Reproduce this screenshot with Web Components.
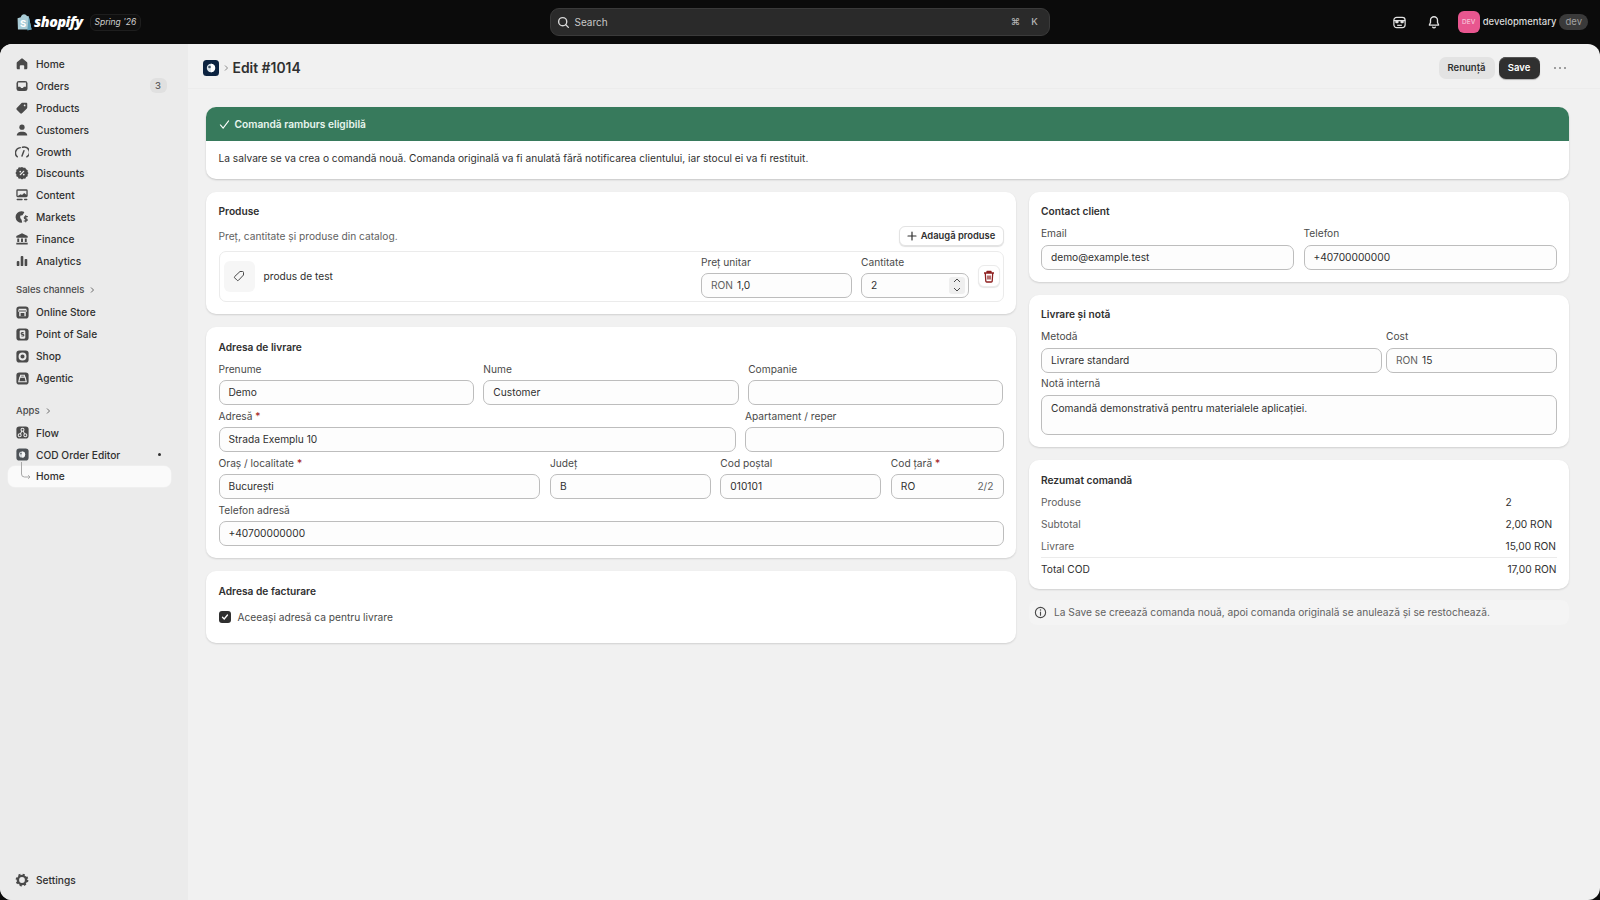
<!doctype html>
<html lang="ro"><head><meta charset="utf-8"><title>Edit #1014</title>
<style>
html,body{margin:0;height:100%;background:#0b0b0b;overflow:hidden}
body{font:400 10.2px/14px Inter,"Liberation Sans",sans-serif;color:#303030}
</style></head><body>
<app-shell>
  <top-bar slot="top"></top-bar>
  <side-nav slot="side">
    <nav-item icon="home">Home</nav-item>
    <nav-item icon="orders" badge="3">Orders</nav-item>
    <nav-item icon="products">Products</nav-item>
    <nav-item icon="customers">Customers</nav-item>
    <nav-item icon="growth">Growth</nav-item>
    <nav-item icon="discounts">Discounts</nav-item>
    <nav-item icon="content">Content</nav-item>
    <nav-item icon="markets">Markets</nav-item>
    <nav-item icon="finance">Finance</nav-item>
    <nav-item icon="analytics">Analytics</nav-item>
    <nav-head style="margin-top:7.4px">Sales channels</nav-head>
    <nav-item icon="store" tile>Online Store</nav-item>
    <nav-item icon="pos" tile>Point of Sale</nav-item>
    <nav-item icon="shop" tile>Shop</nav-item>
    <nav-item icon="agentic" tile>Agentic</nav-item>
    <nav-head style="margin-top:10.8px">Apps</nav-head>
    <nav-item icon="flow" tile>Flow</nav-item>
    <nav-item icon="cod" tile dot>COD Order Editor</nav-item>
    <nav-item sub selected>Home</nav-item>
    <nav-item slot="bottom" icon="settings">Settings</nav-item>
  </side-nav>
  <page-head slot="main"></page-head>
  <page-body slot="main">
    <notice-banner></notice-banner>
    <two-cols>
      <form-card slot="left" heading="Produse" raise>
        <product-editor></product-editor>
      </form-card>
      <form-card slot="left" heading="Adresa de livrare">
        <form-row cols="1fr 1fr 1fr">
          <form-field label="Prenume" value="Demo"></form-field>
          <form-field label="Nume" value="Customer"></form-field>
          <form-field label="Companie"></form-field>
        </form-row>
        <form-row cols="2fr 1fr">
          <form-field label="Adresă" req value="Strada Exemplu 10"></form-field>
          <form-field label="Apartament / reper"></form-field>
        </form-row>
        <form-row cols="2fr 1fr 1fr .7fr">
          <form-field label="Oraș / localitate" req value="București"></form-field>
          <form-field label="Județ" value="B"></form-field>
          <form-field label="Cod poștal" value="010101"></form-field>
          <form-field label="Cod țară" req value="RO" suffix="2/2"></form-field>
        </form-row>
        <form-row cols="1fr">
          <form-field label="Telefon adresă" value="+40700000000"></form-field>
        </form-row>
      </form-card>
      <form-card slot="left" heading="Adresa de facturare" after="12.5px">
        <check-line>Aceeași adresă ca pentru livrare</check-line>
      </form-card>
      <form-card slot="right" heading="Contact client" raise style="--lab:-.75px">
        <form-row cols="1fr 1fr">
          <form-field label="Email" value="demo@example.test"></form-field>
          <form-field label="Telefon" value="+40700000000"></form-field>
        </form-row>
      </form-card>
      <form-card slot="right" heading="Livrare și notă" raise style="--lab:-.75px">
        <form-row cols="2fr 1fr" gap="4px">
          <form-field label="Metodă" value="Livrare standard"></form-field>
          <form-field label="Cost" prefix="RON" value="15"></form-field>
        </form-row>
        <form-row cols="1fr">
          <form-field label="Notă internă" value="Comandă demonstrativă pentru materialele aplicației." area></form-field>
        </form-row>
      </form-card>
      <form-card slot="right" heading="Rezumat comandă">
        <sum-line label="Produse" value="2"></sum-line>
        <sum-line label="Subtotal" value="2,00 RON"></sum-line>
        <sum-line label="Livrare" value="15,00 RON"></sum-line>
        <sum-line label="Total COD" value="17,00 RON" total></sum-line>
      </form-card>
      <info-note slot="right">La Save se creează comanda nouă, apoi comanda originală se anulează și se restochează.</info-note>
    </two-cols>
  </page-body>
</app-shell>
<script>
function def(name, css, html){
  customElements.define(name, class extends HTMLElement{
    connectedCallback(){
      if(this.shadowRoot) return;
      const r=this.attachShadow({mode:'open'});
      const h=typeof html==='function'?html(this):html;
      r.innerHTML='<style>'+css+'</style>'+h;
    }
  });
}
const C='currentColor';
const ICONS={
 home:`<path fill="${C}" d="M7.1 1.9a1.4 1.4 0 0 1 1.8 0l4.6 3.9c.4.3.6.8.6 1.3v5.4c0 .8-.7 1.5-1.5 1.5H10.5v-3.7a1 1 0 0 0-1-1h-3a1 1 0 0 0-1 1V14H3.4c-.8 0-1.5-.7-1.5-1.5V7.1c0-.5.2-1 .6-1.3z"/>`,
 orders:`<rect x="1.7" y="2.2" width="12.6" height="11.6" rx="2.8" fill="${C}"/><path fill="#ebebeb" d="M3.5 4h9v4.8H10.2L9 10.3H7L5.8 8.8H3.5z"/>`,
 products:`<path fill="${C}" fill-rule="evenodd" d="M8.5 2H13a1 1 0 0 1 1 1v4.5c0 .4-.2.8-.4 1L8 14a1.4 1.4 0 0 1-2 0l-4-4a1.4 1.4 0 0 1 0-2l5.5-5.6c.3-.3.6-.4 1-.4zM11 4a1 1 0 1 0 0 2 1 1 0 0 0 0-2z"/>`,
 customers:`<circle cx="8" cy="4.8" r="3" fill="${C}"/><path fill="${C}" d="M2 14.3c0-1.2.3-2 1-2.7C4 10.600 6 10 8 10s4 .6 5 1.600c.7.7 1 1.500 1 2.700z"/>`,
 growth:`<g fill="none" stroke="${C}" stroke-width="1.7" stroke-linecap="round"><path d="M2.6 13.5A6 6 0 0 1 6 3"/><path d="M8.6 2.6A6 6 0 0 1 13.5 13.5"/><path d="M8 12.5 10.2 6.5"/></g>`,
 discounts:`<path fill="${C}" d="M8 1l1.700 1.100 2-.1 1 1.800 1.800 1-.1 2L15.500 8l-1.100 1.700.1 2-1.800 1-1 1.800-2-.1L8 15.500l-1.700-1.100-2 .1-1-1.800-1.800-1 .1-2L.5 8l1.100-1.700-.1-2 1.800-1 1-1.800 2 .1z"/><path stroke="#ebebeb" stroke-width="1.3" stroke-linecap="round" d="M6 10l4-4"/><circle cx="6" cy="6.3" r="1" fill="#ebebeb"/><circle cx="10" cy="9.8" r="1" fill="#ebebeb"/>`,
 content:`<rect x="1.5" y="1.5" width="13" height="9" rx="1.6" fill="${C}"/><path fill="#ebebeb" d="M3 3h10v4.800L10.500 5.800 8 8 6.500 7 3 9z"/><rect x="1.8" y="12.3" width="7" height="1.7" rx=".8" fill="${C}"/><rect x="10.2" y="12.3" width="4" height="1.7" rx=".8" fill="${C}"/>`,
 markets:`<path fill="${C}" d="M7.500 1.500a6.500 6.500 0 0 1 3.200.9L9.500 4.500l-1 1.500-2.500.5L6 9l1.500 2 .7 3.400A6.500 6.500 0 1 1 7.500 1.500z"/><path fill="none" stroke="${C}" stroke-width="1.3" stroke-linecap="round" d="M14.200 7.500h-2.300a1 1 0 0 0 0 2.600h.8a1 1 0 0 1 0 2.500H10.400M12.300 6.500v7"/>`,
 finance:`<path fill="${C}" d="M8 1.500l6.500 3.200v1.800h-13V4.700zM2.600 7.500h2.200v4H2.600zM6.900 7.500h2.200v4H6.900zM11.200 7.500h2.200v4h-2.200zM1.500 12.300h13v2h-13z"/>`,
 analytics:`<g fill="${C}"><rect x="2" y="8" width="3" height="5.8" rx="1"/><rect x="6.5" y="2.3" width="3" height="11.5" rx="1"/><rect x="11" y="5.6" width="3" height="8.2" rx="1"/></g>`,
 store:`<rect x="1.5" y="1.5" width="13" height="13" rx="3" fill="${C}"/><path fill="#ebebeb" d="M4 4h8l.6 2.500a1.300 1.300 0 0 1-1.100 1.300V12h-7V7.800A1.300 1.300 0 0 1 3.400 6.500z"/><path fill="${C}" d="M4.300 5.800h7.400v1H4.300zM6 8.500h4V12H6z"/>`,
 pos:`<rect x="1.5" y="1.5" width="13" height="13" rx="3" fill="${C}"/><rect x="5" y="3.5" width="6" height="9" rx="1.2" fill="#ebebeb"/><path stroke="${C}" stroke-width="1.2" fill="none" d="M9.200 6H7.500a.9.9 0 0 0 0 1.800h1a.9.9 0 0 1 0 1.800H6.800"/>`,
 shop:`<rect x="1.5" y="1.5" width="13" height="13" rx="3" fill="${C}"/><circle cx="8" cy="8" r="3.2" fill="none" stroke="#ebebeb" stroke-width="2"/>`,
 agentic:`<rect x="1.5" y="1.5" width="13" height="13" rx="3" fill="${C}"/><path fill="none" stroke="#ebebeb" stroke-width="1.2" d="M4 11.500 5.200 6.500h5.600l1.200 5zM6 6.500V4.500h4v2"/>`,
 flow:`<rect x="1.5" y="1.5" width="13" height="13" rx="3" fill="${C}"/><g fill="none" stroke="#ebebeb" stroke-width="1.1"><circle cx="8" cy="5" r="1.6"/><circle cx="5" cy="11" r="1.6"/><circle cx="11" cy="11" r="1.6"/><path d="M7.300 6.500 5.700 9.500M8.700 6.500l1.600 3"/></g>`,
 cod:`<rect x="1.5" y="1.5" width="13" height="13" rx="3" fill="#4d5257"/><circle cx="7.5" cy="8" r="3.3" fill="#d5d9dc"/><path d="M7.500 4.700a3.300 3.300 0 0 1 0 6.600z" fill="#f5f7f8"/><circle cx="6.3" cy="7" r="1" fill="#6b7379"/>`,
 settings:`<circle cx="8" cy="8" r="4.7" fill="none" stroke="${C}" stroke-width="2.8"/><circle cx="8" cy="8" r="6.3" fill="none" stroke="${C}" stroke-width="2" stroke-dasharray="2.4 2.55"/>`
};
const icon=(n,s)=>`<svg width="${s}" height="${s}" viewBox="0 0 16 16" aria-hidden="true">${ICONS[n]||''}</svg>`;

def('app-shell',`
:host{display:grid;grid-template-rows:44px 1fr;height:100vh}
.low{display:flex;min-height:0;border-radius:12px;overflow:hidden;background:#f1f1f1}
.main{flex:1;min-width:0;display:flex;flex-direction:column}
`,`<slot name="top"></slot><div class="low"><slot name="side"></slot><div class="main"><slot name="main"></slot></div></div>`);

def('top-bar',`
:host{display:flex;align-items:center;background:#0b0b0b;color:#e3e3e3;height:44px;position:relative}
.logo{display:flex;align-items:center;margin-left:16.5px;width:73.5px;gap:2.5px}
.word{font:italic 800 14.3px/20px "Open Sans",sans-serif;color:#fff;letter-spacing:-.45px}
.bag{position:relative;width:15px;height:18px}
.bag svg{display:block}
.bag b{position:absolute;left:3.5px;top:5px;font:700 9.5px/12px Inter,sans-serif;color:#fff}
.rel{font:italic 400 8.5px/15px Inter,sans-serif;color:#d0d0d0;border:1px solid #1e1e1e;border-radius:6px;padding:0 3.5px;height:15px;background:#0f0f0f}
.search{position:absolute;left:550px;top:8px;width:500px;height:28px;box-sizing:border-box;background:#2a2a2a;border:1px solid #3a3a3a;border-radius:9px;display:flex;align-items:center;padding:0 5px 0 6px;color:#c8c8c8;font-size:10px;gap:4.5px}
.search span.t{flex:1}
kbd{font:500 9.5px/14px Inter,"DejaVu Sans",sans-serif;color:#b5b5b5;width:19px;text-align:center}
kbd+kbd{margin-left:-4.5px}
.right{margin-left:auto;display:flex;align-items:center;padding-right:12px}
.ic{display:flex;width:34px;justify-content:center;color:#e3e3e3}
.av{width:22px;height:22px;border-radius:6px;background:#e8568f;color:#f7c7da;font:500 6.5px/22px Inter,sans-serif;text-align:center;margin:0 3px 0 7px}
.nm{font-size:9.5px;font-weight:500;color:#d9d9d9}
.dev{font-size:9.5px;color:#a0a0a0;background:#3a3a3a;border-radius:8px;padding:0 6px;margin-left:3px;line-height:16px}
`,`<div class="logo"><div class="bag"><svg width="15" height="18" viewBox="0 0 16 18"><path fill="#a9ccd6" d="M4 4C4.500 1.800 6 .6 7.500.6S10 1.500 10.500 2.500l2 .4L15.500 17 1 17 .6 5z"/><path fill="#5fa0b8" d="M12.500 2.900l3 14.100-4.500 1z"/></svg><b>S</b></div><span class="word">shopify</span></div>
<span class="rel">Spring '26</span>
<div class="search"><svg width="13" height="13" viewBox="0 0 16 16" fill="none" stroke="#d8d8d8" stroke-width="1.7" stroke-linecap="round"><circle cx="7" cy="7" r="5"/><path d="M10.800 10.800 14 14"/></svg><span class="t">Search</span><kbd>⌘</kbd><kbd>K</kbd></div>
<div class="right">
<span class="ic"><svg width="15" height="15" viewBox="0 0 16 16" fill="none" stroke="#e3e3e3" stroke-width="1.3"><rect x="2" y="2.5" width="12" height="11" rx="3"/><path d="M2 6h12" /><rect x="3.5" y="6" width="3.5" height="2.7" rx="1" fill="#e3e3e3" stroke="none"/><rect x="9" y="6" width="3.5" height="2.7" rx="1" fill="#e3e3e3" stroke="none"/><path d="M5.500 11h5"/></svg></span>
<span class="ic"><svg width="14" height="14" viewBox="0 0 16 16" fill="none" stroke="#e3e3e3" stroke-width="1.5" stroke-linejoin="round"><path d="M8 2a4 4 0 0 0-4 4v2.500L2.700 11.500h10.600L12 8.500V6a4 4 0 0 0-4-4z"/><path d="M6.500 13.800a1.700 1.700 0 0 0 3 0" stroke-linecap="round"/></svg></span>
<span class="av">DEV</span><span class="nm">developmentary</span><span class="dev">dev</span></div>`);

def('side-nav',`
:host{display:flex;flex-direction:column;width:188px;flex:none;background:#ebebeb;box-sizing:border-box;padding:9.1px 0 9.5px}
.sp{flex:1}
`,`<slot></slot><div class="sp"></div><slot name="bottom"></slot>`);

def('nav-item',`
:host{display:flex;align-items:center;height:21.9px;margin:0 17px 0 8px;padding:0 0 0 6px;border-radius:7px;font-size:10.2px;font-weight:500;color:#303030;position:relative;box-sizing:border-box}
:host([selected]){background:#fafafa;box-shadow:0 0 0 .5px #f3f3f3}
.i{width:16px;height:16px;margin-right:6px;color:#4a4a4a;display:flex;align-items:center;justify-content:center;flex:none}
.i svg{display:block}
.t{flex:1}
.b{font-size:9.5px;color:#616161;background:#e0e0e0;border-radius:6px;width:17px;height:15px;line-height:15px;text-align:center;margin-right:4.5px}
.d{width:3px;height:3px;background:#303030;border-radius:50%;margin-right:10px}
.sub{width:22px;height:21.9px;flex:none;position:relative}
.sub svg{position:absolute;left:6px;top:-4px}
`,h=>{
 let s='';
 if(h.hasAttribute('sub')) s+=`<span class="sub"><svg width="12" height="20" viewBox="0 0 12 20" fill="none" stroke="#a8a8a8" stroke-width="1"><path d="M1.500 0V12a3 3 0 0 0 3 3H10M8.200 13.200 10 15l-1.800 1.800"/></svg></span>`;
 else if(h.getAttribute('icon')) s+=`<span class="i">${icon(h.getAttribute('icon'),h.hasAttribute('tile')?15:14)}</span>`;
 s+=`<span class="t"><slot></slot></span>`;
 if(h.getAttribute('badge')) s+=`<span class="b">${h.getAttribute('badge')}</span>`;
 if(h.hasAttribute('dot')) s+=`<span class="d"></span>`;
 return s;
});

def('nav-head',`
:host{display:flex;align-items:center;height:22px;padding-left:16px;font-size:9.5px;font-weight:500;color:#4a4a4a;gap:4px}
`,`<slot></slot><svg width="8" height="8" viewBox="0 0 8 8" fill="none" stroke="#6a6a6a" stroke-width="1"><path d="M3 1.500 5.500 4 3 6.500"/></svg>`);

def('page-head',`
:host{display:flex;align-items:center;height:45px;flex:none;box-sizing:border-box;border-bottom:1px solid #ececec;padding:3px 31px 0 15px}
.app{width:16px;height:16px;display:block}
.ch{margin:0 2.5px 0 3px;display:block}
h1{margin:0;font:600 13.9px/20px Inter,sans-serif;color:#303030;flex:1}
button{font:600 9.5px/14px Inter,sans-serif;border:0;border-radius:7px;height:22px;padding:0;cursor:pointer}
.g{width:56px;background:#e3e3e3;color:#303030;margin-right:4px}
.s{width:41px;background:#303030;color:#fff;box-shadow:inset 0 1px 0 #555,0 1px 1px #0004}
.more{width:27px;margin-left:7px;color:#8a8a8a;display:flex;justify-content:center;margin-right:-4.5px}
`,`<svg class="app" viewBox="0 0 16 16"><rect width="16" height="16" rx="3.5" fill="#0c2340"/><circle cx="8" cy="8" r="4.2" fill="#dbe4ea"/><path d="M8 3.800a4.200 4.200 0 0 1 0 8.400z" fill="#fff"/><circle cx="6.5" cy="7" r="1.3" fill="#3d5366"/></svg>
<svg class="ch" width="8" height="8" viewBox="0 0 8 8" fill="none" stroke="#8a8a8a" stroke-width="1"><path d="M3 1.500 5.500 4 3 6.500"/></svg>
<h1>Edit #1014</h1><button class="g">Renunță</button><button class="s">Save</button><span class="more"><svg width="14" height="4" viewBox="0 0 14 4" fill="#8a8a8a"><circle cx="2" cy="2" r="1.1"/><circle cx="7" cy="2" r="1.1"/><circle cx="12" cy="2" r="1.1"/></svg></span>`);

def('page-body',`
:host{display:flex;flex-direction:column;gap:13px;padding:18px 31px 0 18px}
`,`<slot></slot>`);

def('notice-banner',`
:host{display:block;background:#fff;border-radius:10px;overflow:hidden;box-shadow:0 1px 2px rgba(0,0,0,.18)}
.h{display:flex;align-items:center;gap:5px;background:#377a5c;color:#e8f5ee;height:34px;padding:0 12.5px;font-weight:600;font-size:10.2px}
.b{height:37.5px;box-sizing:border-box;display:flex;align-items:center;padding:0 12.5px 3px}
`,`<div class="h"><svg width="11" height="11" viewBox="0 0 12 12" fill="none" stroke="#fff" stroke-width="1.2" stroke-linecap="round"><path d="M1.500 6.500 4.500 10 10.500 2"/></svg>Comandă ramburs eligibilă</div><div class="b">La salvare se va crea o comandă nouă. Comanda originală va fi anulată fără notificarea clientului, iar stocul ei va fi restituit.</div>`);

def('two-cols',`
:host{display:grid;grid-template-columns:810px 540px;gap:13px;align-items:start}
.c{display:flex;flex-direction:column;gap:12.5px}
.c.r{gap:12.75px}
`,`<div class="c"><slot name="left"></slot></div><div class="c r"><slot name="right"></slot></div>`);

def('form-card',`
:host{display:block;background:#fff;border-radius:10px;box-shadow:0 1px 2px rgba(0,0,0,.14);padding:13px 12.5px 12.5px;box-sizing:border-box}
:host([slot=right]){padding-left:12px}
:host([raise]){padding-top:12px}
h2{margin:0 0 8px;font:600 10.2px/14px Inter,sans-serif;color:#303030}
.w{display:flex;flex-direction:column;gap:4px}
`,h=>`<h2 style="margin-bottom:${h.getAttribute('after')||(h.hasAttribute('raise')?'9px':'8px')}">${h.getAttribute('heading')}</h2><div class="w"><slot></slot></div>`);

def('form-row',`
:host{display:grid;gap:9.5px}
`,h=>{const g=h.getAttribute('gap');h.style.gridTemplateColumns=h.getAttribute('cols');if(g)h.style.gap=g;return '<slot></slot>';});

def('form-field',`
:host{display:flex;flex-direction:column;gap:4px;min-width:0}
.l{line-height:14px;color:#4a4a4a;height:14px;margin-top:var(--lab,0px);margin-bottom:calc(-1 * var(--lab,0px))}
.r{color:#a32020}
.i{box-sizing:border-box;height:25px;border:1px solid #bdbdbd;border-radius:7px;background:#fdfdfd;display:flex;align-items:center;padding:0 9px;color:#303030;white-space:nowrap;gap:4px}
.i.a{height:40px;align-items:flex-start;padding-top:5px}
.p{color:#616161}.v{flex:1}.s{color:#616161}
`,h=>{
 const a=k=>h.getAttribute(k);
 return `<div class="l">${a('label')}${h.hasAttribute('req')?'<span class="r"> *</span>':''}</div><div class="i${h.hasAttribute('area')?' a':''}">${a('prefix')?`<span class="p">${a('prefix')}</span>`:''}<span class="v">${a('value')||''}</span>${a('suffix')?`<span class="s">${a('suffix')}</span>`:''}</div>`;
});

def('product-editor',`
:host{display:block;margin-top:-8px}
.top{display:flex;align-items:flex-end;justify-content:space-between;height:20.5px;margin-top:7px;margin-bottom:4.5px}
.sub{color:#616161;align-self:center}
.add{display:flex;align-items:center;gap:4px;box-sizing:border-box;height:20.5px;width:105px;justify-content:center;background:#fff;border:1px solid #e3e3e3;border-radius:6px;box-shadow:0 1px 1px rgba(0,0,0,.12);font-weight:600;font-size:9.4px;color:#303030}
.row{display:flex;align-items:center;box-sizing:border-box;height:51px;border:1px solid #ebebeb;border-radius:7px;padding:0 3px 0 4px}
.th{width:31px;height:31px;background:#f6f6f6;border-radius:6px;display:flex;align-items:center;justify-content:center;flex:none}
.n{flex:1;margin-left:9px}
.f{display:flex;flex-direction:column;gap:4px}
.l{line-height:14px;color:#4a4a4a}
.i{box-sizing:border-box;height:25px;border:1px solid #bdbdbd;border-radius:7px;background:#fdfdfd;display:flex;align-items:center;padding:0 9px;gap:4px;position:relative}
.i .p{color:#616161}
.st{position:absolute;right:3px;top:3px;width:16px;height:17px;background:#efefef;border-radius:3px;display:flex;flex-direction:column;align-items:center;justify-content:space-around}
.tr{width:22px;height:22px;box-sizing:border-box;margin-left:9px;border:1px solid #ebebeb;border-radius:6px;background:#fff;box-shadow:0 1px 1px rgba(0,0,0,.1);display:flex;align-items:center;justify-content:center}
`,`<div class="top"><span class="sub">Preț, cantitate și produse din catalog.</span><span class="add"><svg width="10" height="10" viewBox="0 0 10 10" stroke="#303030" stroke-width="1.2" stroke-linecap="round"><path d="M5 1v8M1 5h8"/></svg>Adaugă produse</span></div>
<div class="row"><span class="th"><svg width="12" height="12" viewBox="0 0 12 12" fill="none" stroke="#4a4a4a" stroke-width="1"><path d="M7 1.500h2.500a1 1 0 0 1 1 1V5L5.500 10.300a1 1 0 0 1-1.400 0L1.700 7.900a1 1 0 0 1 0-1.400z" stroke-linejoin="round"/></svg></span><span class="n">produs de test</span>
<div class="f" style="width:150.5px;margin-right:9.5px"><span class="l">Preț unitar</span><div class="i"><span class="p">RON</span><span>1,0</span></div></div>
<div class="f" style="width:107.5px"><span class="l">Cantitate</span><div class="i"><span>2</span><span class="st"><svg width="8" height="5" viewBox="0 0 8 5" fill="none" stroke="#4a4a4a"><path d="M1 4 4 1l3 3"/></svg><svg width="8" height="5" viewBox="0 0 8 5" fill="none" stroke="#4a4a4a"><path d="M1 1l3 3 3-3"/></svg></span></div></div>
<span class="tr"><svg width="12" height="13" viewBox="0 0 12 13" fill="none" stroke="#8e1f1f" stroke-width="1.3" stroke-linejoin="round"><path d="M1 3h10M4 3V1.500h4V3M2.300 3l.5 8.200a.9.9 0 0 0 .9.8h4.600a.9.9 0 0 0 .9-.8L9.700 3M5 5.500v4M7 5.500v4"/></svg></span></div>`);

def('check-line',`
:host{display:flex;align-items:center;gap:6.5px;color:#4a4a4a;height:14px;margin-bottom:6.5px}
.b{width:12.5px;height:12.5px;border-radius:3px;background:#303030;display:flex;align-items:center;justify-content:center}
`,`<span class="b"><svg width="8" height="8" viewBox="0 0 8 8" fill="none" stroke="#fff" stroke-width="1.3" stroke-linecap="round"><path d="M1.500 4.200 3.200 6 6.500 2"/></svg></span><slot></slot>`);

def('sum-line',`
:host{display:flex;justify-content:space-between;line-height:14px;padding-bottom:4px;color:#616161}
:host([total]){color:#303030;border-top:1px solid #ebebeb;padding:4px 0 0;margin-top:-4px}
.v{width:51px;color:#303030;white-space:nowrap}
:host([total]) .v{text-align:right}
`,h=>`<span>${h.getAttribute('label')}</span><span class="v">${h.getAttribute('value')}</span>`);

def('info-note',`
:host{display:flex;align-items:center;gap:7px;height:25px;margin-top:-1.5px;background:#f4f4f4;border-radius:8px;padding:0 5px;color:#616161}
`,`<svg width="13" height="13" viewBox="0 0 14 14" fill="none" stroke="#4a4a4a" stroke-width="1.2"><circle cx="7" cy="7" r="5.5"/><path d="M7 6.500V10" stroke-linecap="round"/><circle cx="7" cy="4.3" r=".8" fill="#4a4a4a" stroke="none"/></svg><slot></slot>`);
</script>
</body></html>
